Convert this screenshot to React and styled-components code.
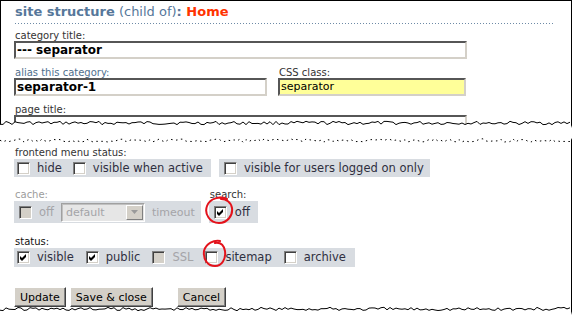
import styled, { createGlobalStyle } from "styled-components";

const GlobalStyle = createGlobalStyle`
  html, body {
    margin: 0;
    padding: 0;
    background: #fff;
  }
  body {
    font-family: "DejaVu Sans", Verdana, sans-serif;
    color: #333;
  }
`;

// jagged "torn paper" line, deterministic
function jag(width, mid, amp, step, seed) {
  let s = seed;
  const rnd = () => {
    s = (s * 9301 + 49297) % 233280;
    return s / 233280;
  };
  const pts = [];
  for (let x = 0; x <= width; x += step) {
    pts.push(`${x},${(mid + (rnd() - 0.5) * 2 * amp).toFixed(1)}`);
  }
  return pts.join(" ");
}

function TornEdge({ side, seed, mid, dashed }) {
  const w = 572;
  const h = 10;
  const line = jag(w, mid, 1.7, 3, seed);
  const fill =
    side === "bottom" ? `0,${h} ${line} ${w},${h}` : `0,0 ${line} ${w},0`;
  return (
    <Edge $side={side} width={w} height={h} viewBox={`0 0 ${w} ${h}`}>
      <polygon points={fill} fill="#fff" />
      <polyline
        points={line}
        fill="none"
        stroke="#000"
        strokeWidth="1"
        strokeDasharray={dashed ? "1.5 3.5" : undefined}
      />
    </Edge>
  );
}

function Check({ checked, disabled }) {
  return (
    <Box $disabled={disabled}>
      {checked && (
        <svg width="7" height="7" viewBox="0 0 7 7">
          <path d="M0 2 L2 4 L6 0 L6 3 L2 7 L0 5 Z" fill="#000" />
        </svg>
      )}
    </Box>
  );
}

function Ring({ x, y, w, h, d }) {
  return (
    <RingSvg style={{ left: x, top: y }} width={w} height={h} viewBox={`0 0 ${w} ${h}`}>
      <path d={d} fill="none" stroke="#e3121b" strokeWidth="2" strokeLinecap="round" />
    </RingSvg>
  );
}

export default function App() {
  return (
    <>
      <GlobalStyle />
      <Page>
        <TopPanel>
          <Title>
            <b>site structure</b> (child of)<b>: </b>
            <Home>Home</Home>
          </Title>
          <Rule />
          <Field $mt={6}>
            <Label>category title:</Label>
            <TextBox $w={453} $bold>--- separator</TextBox>
          </Field>
          <FieldRow>
            <Field $mt={0}>
              <Label $tone="blue">alias this category:</Label>
              <TextBox $w={253} $bold>separator-1</TextBox>
            </Field>
            <Field $mt={0}>
              <Label>CSS class:</Label>
              <TextBox $w={188} $highlight>separator</TextBox>
            </Field>
          </FieldRow>
          <Field>
            <Label>page title:</Label>
            <TextBox $w={453} />
          </Field>
          <TornEdge side="bottom" seed={17} mid={5} />
        </TopPanel>

        <BottomPanel>
          <TornEdge side="top" seed={5} mid={2.5} dashed />
          <Label>frontend menu status:</Label>
          <GroupRow>
            <Group $h={18} $pl={3}>
              <Item>
                <Check />
                hide
              </Item>
              <Item>
                <Check />
                visible when active
              </Item>
            </Group>
            <Group $h={18} $pl={5} $pr={6}>
              <Item>
                <Check />
                visible for users logged on only
              </Item>
            </Group>
          </GroupRow>

          <GroupRow $mt={12}>
            <Column>
              <Label $tone="muted">cache:</Label>
              <Group $h={22} $pl={5} $pr={6} $gap={7}>
                <Item $disabled>
                  <Check disabled />
                  off
                </Item>
                <SelectBox>
                  <SelectText>default</SelectText>
                  <SelectButton>
                    <svg width="7" height="4" viewBox="0 0 7 4">
                      <path d="M0 0 H7 L3.5 4 Z" fill="#9a9a9a" />
                    </svg>
                  </SelectButton>
                </SelectBox>
                <Muted>timeout</Muted>
              </Group>
            </Column>
            <Column>
              <Label>search:</Label>
              <Group $h={22} $pl={5}>
                <Item $gap={8}>
                  <Check checked />
                  off
                  <Ring
                    x={-10}
                    y={-10}
                    w={32}
                    h={30}
                    d="M23 3 C16 0, 6 2, 3 10 C0 18, 6 27, 15 27 C23 27, 29 20, 28 12 C27 6, 22 3, 17 3"
                  />
                </Item>
              </Group>
            </Column>
          </GroupRow>

          <Label $tone="dark" $mt={13}>status:</Label>
          <GroupRow>
            <Group $h={19} $pl={3} $pr={9} $gap={12}>
              <Item>
                <Check checked />
                visible
              </Item>
              <Item>
                <Check checked />
                public
              </Item>
              <Item $disabled>
                <Check disabled />
                SSL
              </Item>
              <Item>
                <Check />
                sitemap
                <Ring
                  x={-3}
                  y={-12}
                  w={26}
                  h={29}
                  d="M18 2 C12 1, 4 4, 2 12 C1 21, 6 27, 13 27 C20 27, 24 20, 23 12 C22 7, 19 3, 13 4"
                />
              </Item>
              <Item>
                <Check />
                archive
              </Item>
            </Group>
          </GroupRow>

          <Buttons>
            <Button>Update</Button>
            <Button>Save &amp; close</Button>
            <Button $gapBefore={20}>Cancel</Button>
          </Buttons>
          <TornEdge side="bottom" seed={41} mid={4} />
        </BottomPanel>
      </Page>
    </>
  );
}

const Page = styled.div`
  width: 573px;
  height: 326px;
  overflow: hidden;
`;

const TopPanel = styled.div`
  position: relative;
  box-sizing: border-box;
  width: 572px;
  height: 128px;
  padding: 4px 0 0 14px;
  overflow: hidden;
  box-shadow: inset 1px 0 #000, inset -1px 0 #000, inset 0 1px #000;
`;

const Edge = styled.svg`
  position: absolute;
  left: 0;
  display: block;
  ${(p) => (p.$side === "bottom" ? "bottom: 0;" : "top: 0;")}
`;

const Title = styled.div`
  font-size: 13px;
  line-height: 16px;
  color: #56779a;
  white-space: nowrap;
  padding-left: 1px;
`;

const Home = styled.b`
  color: #ff3300;
`;

const Rule = styled.div`
  width: 538px;
  height: 1px;
  margin: 3px 0 0 1px;
  background: repeating-linear-gradient(to right, #6d8aa6 0 1px, transparent 1px 3px);
`;

const Field = styled.div`
  margin-top: ${(p) => p.$mt ?? 8}px;
`;

const FieldRow = styled.div`
  display: flex;
  gap: 11px;
  margin-top: 8px;
`;

const tones = {
  normal: "#333333",
  blue: "#4f6f8e",
  muted: "#9c9c9c",
  dark: "#111111",
};

const Label = styled.div`
  font-size: 10px;
  line-height: 11px;
  height: 11px;
  margin-top: ${(p) => p.$mt ?? 0}px;
  margin-bottom: 1px;
  padding-left: 1px;
  color: ${(p) => tones[p.$tone || "normal"]};
  white-space: nowrap;
`;

const TextBox = styled.div`
  box-sizing: border-box;
  width: ${(p) => p.$w}px;
  height: 18px;
  margin-top: -1px;
  border-style: solid;
  border-width: 2px;
  border-color: #565656 #d4d0c8 #d4d0c8 #565656;
  background: ${(p) => (p.$highlight ? "#ffff99" : "#fff")};
  padding: 0 2px 0 1px;
  font-size: ${(p) => (p.$bold ? 12 : 11)}px;
  font-weight: ${(p) => (p.$bold ? 700 : 400)};
  line-height: 14px;
  color: #000;
  white-space: nowrap;
  overflow: hidden;
`;

const BottomPanel = styled.div`
  position: relative;
  box-sizing: border-box;
  width: 572px;
  height: 177px;
  margin-top: 10px;
  padding: 9px 0 0 14px;
  overflow: hidden;
  box-shadow: inset -1px 0 #000;
`;

const GroupRow = styled.div`
  display: flex;
  gap: 8px;
  margin-top: ${(p) => p.$mt ?? 0}px;
`;

const Column = styled.div`
  display: flex;
  flex-direction: column;
`;

const Group = styled.div`
  box-sizing: border-box;
  display: flex;
  align-items: center;
  gap: ${(p) => p.$gap ?? 11}px;
  height: ${(p) => p.$h}px;
  padding: 0 ${(p) => p.$pr ?? 8}px 0 ${(p) => p.$pl ?? 3}px;
  background: #d8dce1;
`;

const Item = styled.div`
  position: relative;
  display: flex;
  align-items: center;
  gap: ${(p) => p.$gap ?? 7}px;
  font-size: 11.5px;
  line-height: 13px;
  color: ${(p) => (p.$disabled ? "#a4a4a8" : "#2f2f40")};
  white-space: nowrap;
`;

const Muted = styled.span`
  font-size: 11px;
  color: #a4a4a8;
  white-space: nowrap;
`;

const Box = styled.span`
  box-sizing: border-box;
  display: flex;
  align-items: center;
  justify-content: center;
  width: 13px;
  height: 13px;
  border-style: solid;
  border-width: 1px;
  border-color: #808080 #fff #fff #808080;
  box-shadow: inset 1px 1px #404040, inset -1px -1px #d4d0c8;
  background: ${(p) => (p.$disabled ? "#d4d0c8" : "#fff")};
`;

const RingSvg = styled.svg`
  position: absolute;
  pointer-events: none;
`;

const SelectBox = styled.div`
  box-sizing: border-box;
  display: flex;
  align-items: center;
  justify-content: space-between;
  width: 84px;
  height: 19px;
  border-style: solid;
  border-width: 1px;
  border-color: #a0a0a0 #fff #fff #a0a0a0;
  box-shadow: inset 1px 1px #c0c0c0;
  background: #e6e6e6;
  padding: 0 1px 0 4px;
`;

const SelectText = styled.span`
  font-size: 11px;
  color: #a4a4a8;
`;

const SelectButton = styled.span`
  box-sizing: border-box;
  display: flex;
  align-items: center;
  justify-content: center;
  width: 17px;
  height: 15px;
  background: #d4d0c8;
  border-style: solid;
  border-width: 1px;
  border-color: #fff #808080 #808080 #fff;
`;

const Buttons = styled.div`
  display: flex;
  gap: 4px;
  margin-top: 20px;
`;

const Button = styled.button`
  box-sizing: border-box;
  height: 20px;
  margin: 0 0 0 ${(p) => p.$gapBefore ?? 0}px;
  padding: 0 5px;
  font-family: "DejaVu Sans", Verdana, sans-serif;
  font-size: 11px;
  color: #000;
  background: #d4d0c8;
  border-style: solid;
  border-width: 1px;
  border-color: #fff #404040 #404040 #fff;
  box-shadow: inset -1px -1px #808080;
  border-radius: 0;
`;
